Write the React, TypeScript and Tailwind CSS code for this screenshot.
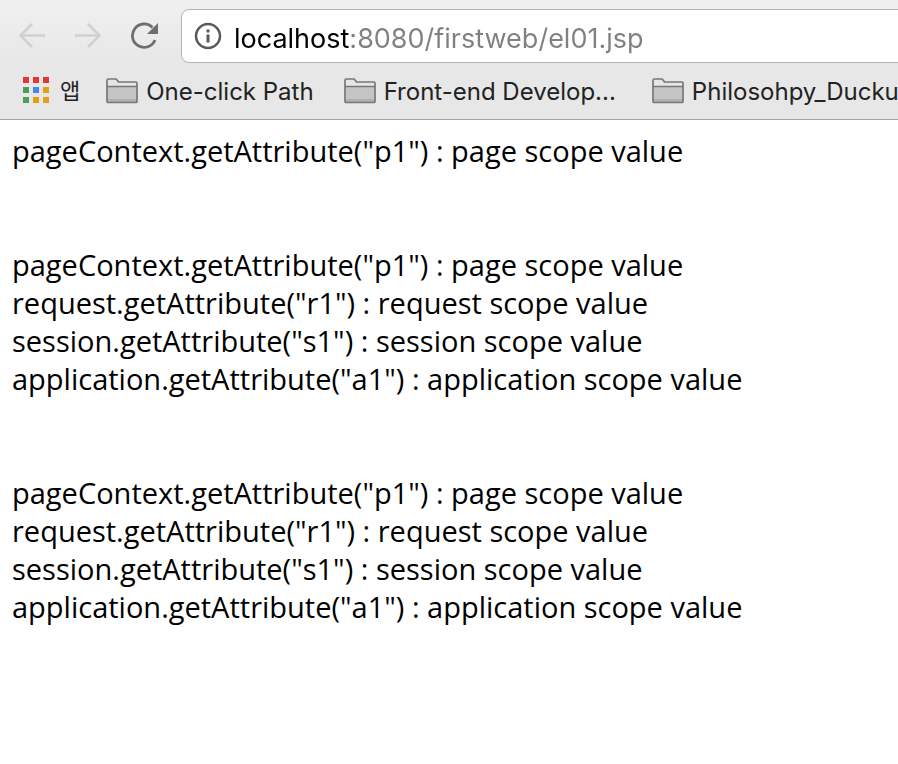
import React from "react";

const uiFont = "font-['Inter','Noto_Sans_CJK_KR',sans-serif]";

function FolderIcon() {
  return (
    <svg width="32" height="26" viewBox="0 0 32 26" className="shrink-0" aria-hidden="true">
      <path d="M1 24V2.500Q1 1 2.500 1H9.500Q10.500 1 11 2L12.500 4H30Q31 4 31 5V23.500Q31 24.500 30 24.500H2Q1 24.500 1 23.500Z" fill="#e6e6e6" />
      <path d="M1 8.500H31V24H1Z" fill="#c5c5c5" />
      <path d="M2 21H30V24H2Z" fill="#b0b0b0" />
      <path d="M1 8.500H31M1 23.500V2.500Q1 1 2.500 1H9.500Q10.500 1 11 2L12.500 4H30Q31 4 31 5V23.500Q31 24.500 30 24.500H2Q1 24.500 1 23.500Z" fill="none" stroke="#777" strokeWidth="1.700" />
    </svg>
  );
}

const appColors = [
  "#e53535", "#e53535", "#e53535",
  "#4e9d57", "#4688f1", "#e3a10f",
  "#4e9d57", "#e3a10f", "#e3a10f",
];

function AppsIcon() {
  return (
    <svg width="26" height="28" viewBox="0 0 26 28" className="shrink-0" aria-hidden="true">
      {appColors.map((c, i) => (
        <rect key={i} x={(i % 3) * 10} y={Math.floor(i / 3) * 10} width="6" height="6" fill={c} />
      ))}
    </svg>
  );
}

const page = 'pageContext.getAttribute("p1") : page scope value';
const scopes = [
  page,
  'request.getAttribute("r1") : request scope value',
  'session.getAttribute("s1") : session scope value',
  'application.getAttribute("a1") : application scope value',
];

export default function App() {
  return (
    <div className="min-h-screen overflow-x-hidden bg-white">
      <header className="overflow-hidden border-b border-[#a3a3a3] bg-linear-to-b from-[#f0f0f0] to-[#e7e7e7] to-55%">
        <div className="flex items-center pt-[9px] pl-[18px]">
          <button type="button" aria-label="Back" className="mr-7 shrink-0">
            <svg width="28" height="28" viewBox="0 0 28 28" fill="none" stroke="#d0d0d0" strokeWidth="2.600">
              <path d="M27 13.500H3M14 2L2.500 13.500L14 25" />
            </svg>
          </button>
          <button type="button" aria-label="Forward" className="mr-7 shrink-0">
            <svg width="28" height="28" viewBox="0 0 28 28" fill="none" stroke="#d0d0d0" strokeWidth="2.600">
              <path d="M1 13.500H25M14 2L25.500 13.500L14 25" />
            </svg>
          </button>
          <button type="button" aria-label="Reload" className="mr-[23px] shrink-0">
            <svg width="28" height="28" viewBox="0 0 28 28">
              <path d="M22.500 5.500A11.700 11.700 0 1 0 25 18" fill="none" stroke="#6e6e6e" strokeWidth="2.800" />
              <path d="M28 1V12H17Z" fill="#6e6e6e" />
            </svg>
          </button>
          <div className="-mr-4 flex h-[54px] flex-1 items-center rounded-lg border border-[#b4b4b4] bg-white pl-3">
            <svg width="28" height="28" viewBox="0 0 28 28" className="mr-3 shrink-0" aria-hidden="true">
              <circle cx="14" cy="14" r="12" fill="none" stroke="#5a5a5a" strokeWidth="2.500" />
              <path d="M12.500 7.500H15.500V10.500H12.500ZM12.500 12.500H15.500V20.500H12.500Z" fill="#5a5a5a" />
            </svg>
            <input
              type="text"
              aria-label="Address"
              defaultValue="localhost:8080/firstweb/el01.jsp"
              className="h-11 min-w-0 flex-1 bg-linear-to-r from-black from-[117px] to-[#808080] to-[117px] bg-clip-text pt-1 font-['Inter',sans-serif] text-[27px] text-transparent caret-black outline-none"
            />
          </div>
        </div>
        <nav aria-label="Bookmarks" className={`${uiFont} flex h-14 items-center pl-[23px] text-2xl whitespace-nowrap text-[#222]`}>
          <a href="#apps" className="mr-[26px] flex items-center gap-[11px]">
            <AppsIcon />
            <span className="pt-0.5 text-[22px]">앱</span>
          </a>
          <a href="#one" className="mr-[30px] flex items-center gap-2">
            <FolderIcon />
            <span className="pt-0.5">One-click Path</span>
          </a>
          <a href="#front" className="mr-9 flex items-center gap-2">
            <FolderIcon />
            <span className="pt-0.5">Front-end Develop...</span>
          </a>
          <a href="#philosophy" className="flex items-center gap-2">
            <FolderIcon />
            <span className="pt-0.5">Philosohpy_Ducku</span>
          </a>
        </nav>
      </header>
      <main className="px-3 pt-3 font-['Open_Sans',sans-serif] text-[29px] leading-[38px] text-black">
        <p className="mb-[76px]">{page}</p>
        <div className="mb-[76px]">
          {scopes.map((line) => (
            <p key={line}>{line}</p>
          ))}
        </div>
        <div>
          {scopes.map((line) => (
            <p key={line}>{line}</p>
          ))}
        </div>
      </main>
    </div>
  );
}
